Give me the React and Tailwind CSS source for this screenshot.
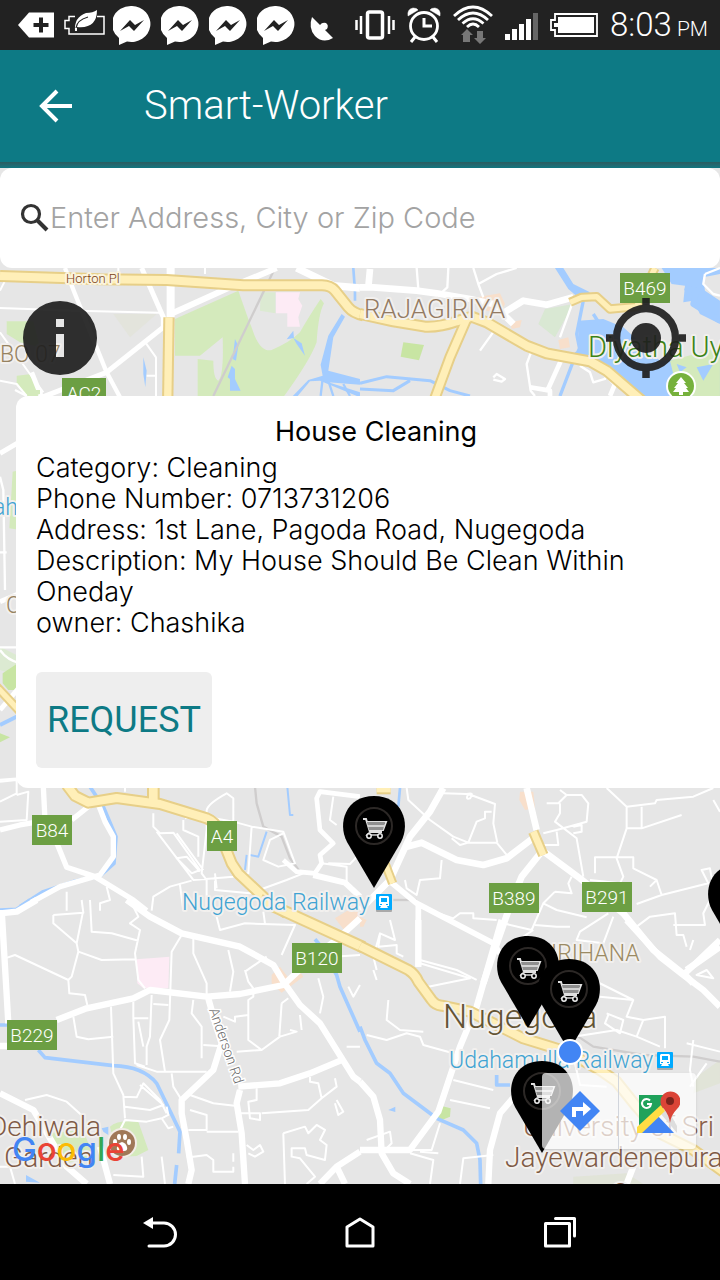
import React from "react";

const TILES = [
  {
    at: "translate(0 264) scale(0.3333)",
    areas: [
      ["#d4eabc", "M525 165L715 80L745 165Q755 190 764 215Q785 265 815 258Q870 235 900 205Q925 160 962 105L972 118Q955 150 950 235Q930 290 850 400H593V285L640 290Q640 345 655 350Q672 335 668 220L600 275H525Z"],
      ["#d4eabc", "M20 172H100L120 250L60 235L20 210Z"],
      ["#d4eabc", "M50 335L95 330L125 385L110 400H80L50 355Z"],
      ["#fdebf5", "M828 85H900L895 105L907 125L895 160L900 188H862V148H828Z"],
      ["#dcead2", "M782 85H826V148L780 140Z"],
      ["#e3e4dc", "M340 150L470 150L390 220Z"],
      ["#a3ccff", "M705 225L715 245L708 290L698 285ZM695 305L705 315V345L722 380H690V345L683 340ZM880 200L882 222L860 226ZM880 222L905 238L915 275L890 240ZM430 280L440 320L436 370L430 330Z"],
      ["#a3ccff", "M1025 150L1035 158L1000 220L985 320L1080 345V362L985 355L1080 385V400L960 350L930 352L890 400H875L925 348L968 335L962 302L985 215Z"],
    ],
    gray: ["M825 12L640 396"],
    water: [["M1060 12L1065 80V110", 8], ["M968 345L962 396M985 350L1000 396M1030 360L1050 396", 7]],
    white: [
      ["M195 12L225 90L320 325L360 400", 13],
      ["M425 12L490 160V190L320 325L125 400L95 325", 15],
      ["M512 0V160", 24],
      ["M512 150L690 70L830 12", 18],
      ["M890 12L1000 65L1080 72", 22],
      ["M0 132L230 140L480 146M436 235L468 280V400M440 335H468M0 205L90 330L130 385M0 350L50 360L80 396M615 12V30M0 80L20 40M355 12V40", 6],
    ],
    yellow: [
      ["M0 36L300 46L500 48L730 64H960Q990 62 1005 80L1045 130Q1060 148 1090 154", 32],
      ["M507 160L503 420", 30],
    ],
  },
  {
    at: "translate(360 264) scale(0.3333)",
    areas: [
      ["#a3ccff", "M905 12H1080V30L1030 40L1035 80L1080 110V180L1020 150L1000 110L970 115L975 65L935 60Z"],
      ["#a3ccff", "M655 170L730 165L790 190L900 290L1080 280V400H830L740 300L640 280L655 250Z"],
      ["#a3ccff", "M585 12H610L640 60L690 85L660 105L625 75Z"],
      ["#d4eabc", "M930 290L1080 250V396H1000L950 370Z"],
      ["#a3ccff", "M950 300L980 310L960 325ZM1010 310L1060 300L1030 350Z"],
      ["#c8e5a3", "M130 235L192 243L177 289L122 278Z"],
      ["#d9e8d3", "M555 135L640 120L585 220L535 180Z"],
      ["#f8dfcb", "M350 100L420 88L435 120L420 150L360 135ZM595 228L625 220L630 250L600 255ZM450 175L485 168L480 190L455 195Z"],
    ],
    gray: [],
    water: [
      ["M0 358L80 338L210 350L270 380L330 396M0 375L100 380L150 350", 9],
      ["M670 110L650 210L660 260M700 150L770 260M650 265L600 396", 10],
      ["M975 70L1010 80L1000 120L1080 170", 18],
    ],
    white: [
      ["M0 70H40L170 80L230 88L330 105L400 120L460 180M425 150L490 110L560 122L640 100", 20],
      ["M30 15L25 70", 20],
      ["M340 12L355 60L370 100M355 60L410 30L470 12M170 12L175 75M265 12L262 70L240 90M410 190L360 260M515 260L500 300L512 380L525 396M400 340L410 330L435 345L425 353L400 347M640 110L600 220", 7],
      ["M605 285L560 385M510 370L570 380V396M715 305L765 360L750 396", 14],
      ["M660 305L690 325L700 355L735 345L745 320M1035 30L1030 60L1060 90L1080 95M1035 30L1080 12", 7],
    ],
    yellow: [
      ["M320 165L270 280L222 410", 30],
      ["M0 150L100 172L195 188Q240 190 290 172L335 158L380 175L500 245L560 268L690 292L740 320L845 410", 32],
      ["M630 115L665 100L710 98L750 135L830 128L885 12", 24],
    ],
  },
  {
    at: "translate(0 390) scale(0.3333)",
    areas: [
      ["#d4eabc", "M38 245L60 240V420L28 415ZM70 0H120V12L100 18Z"],
      ["#dcead2", "M0 770L60 800V860L0 840Z"],
      ["#c8e5a3", "M8 850L60 815V900H25L8 880ZM0 1030L30 1042L0 1057Z"],
    ],
    gray: [],
    water: [["M0 1005L60 975", 12]],
    white: [["M0 190L60 155M0 635L60 610M0 960L60 890", 15], ["M0 260L10 300L15 600M0 487H20M0 772H60M0 780Q20 810 60 820M45 0L80 18M0 1170L60 1165", 7]],
    yellow: [["M-10 890L60 965", 24]],
  },
  {
    at: "translate(0 640) scale(0.3333)",
    areas: [],
    gray: ["M765 440L770 490L790 560L845 590L870 655L900 695"],
    water: [
      ["M270 440L310 500L348 590L342 670L300 708L220 725L130 755L60 800", 11],
      ["M862 440L870 525L880 525M800 575L775 650L750 645M740 645L735 690", 6],
    ],
    white: [
      ["M130 440L135 540L175 620L200 682L285 710L400 780L440 812M0 570L60 555L100 548M215 540L290 480M290 480L315 545L340 590V650L300 705L180 740L70 800L50 812", 16],
      ["M1080 470L960 455L950 475L960 570L1000 610L960 645L965 670L945 700L890 695L850 660", 14],
      ["M940 705L1035 728L1080 770", 18],
      ["M0 425L50 420V460L0 485M50 465L85 455L80 540L0 545M460 520V560L480 580L520 578L600 690L575 700L530 655L560 650L600 695M470 575L580 720L700 710L745 700L755 560L700 545L590 525L555 535M620 510Q625 490 680 460L700 475V550M620 510V570L605 700L620 720V812M550 540V570L595 590V650M530 580L610 690M375 440V455M540 735L550 812M575 722L510 740L460 770L455 812M645 722V750L750 760L860 720L910 700M755 560L850 575L885 670L835 680L790 660L810 600L850 580M985 670L1050 672L1080 640M1000 470L990 540L1010 555M650 745L645 700M200 755V812M320 740L330 780L300 790V812M965 670L1040 680V728", 6],
    ],
    yellow: [
      ["M460 400V490", 34],
      ["M200 435L225 468L265 488L350 474L480 492L620 535Q645 545 655 570L695 670L715 700L800 780L860 820", 32],
    ],
  },
  {
    at: "translate(360 780) scale(0.3333)",
    areas: [["#f8dfcb", "M480 35H520L525 85L495 90L478 60ZM0 410L20 420L10 440H0Z"]],
    gray: ["M100 360H170"],
    water: [["M120 24L115 80", 8]],
    white: [
      ["M250 24L210 95L150 170L120 235L90 300L0 390M500 24L530 150M525 170L440 235L370 255L290 240L185 188L140 200M545 215L485 290L460 350L400 520L370 610M545 210L660 295L790 400L880 510L980 590L1000 610M1080 500L980 570", 20],
      ["M85 300L170 370L400 490L420 520M175 370V560", 17],
      ["M140 24L145 60L210 120L280 170L325 188H410L440 225M250 40L320 42Q345 35 330 55Q315 60 325 42L405 72L400 130L412 188M395 95H375V115L350 125L325 188L300 195L275 175M245 240L240 295L180 300L170 345L140 325L135 300M560 70H595L620 45L600 30M620 45H665L685 70L680 125L590 150L550 160M600 70V100L585 125L650 175L670 290M590 155L595 195H550M640 140L665 135V155L640 160M740 24L800 80L885 70L890 60L1000 50L1060 24M845 80V145L965 105M800 80V145H845M800 145L770 235L790 290L780 310L690 300M1060 60L1080 95M705 280V232H820V265L890 300L905 345L830 372M870 320L890 300M905 345L1045 310L1025 270L1050 265L1060 320M635 290L625 310L635 340L585 335M585 335L550 370L515 450L430 430M550 370L590 390L680 412M760 410L730 490L650 480L660 455L745 400M525 435L590 440H630M830 440L870 410L945 400L950 465H970L980 500M940 435L1035 435L1030 400L1050 360M180 380L280 415L300 400H340V415L410 420M60 465L55 500L110 495V520L130 530M40 570L50 600M180 540L290 570L350 600M520 450L490 470", 6],
    ],
    yellow: [["M520 155L550 225", 28], ["M75 250L98 310", 24], ["M50 30H92", 22]],
  },
  {
    at: "translate(0 900) scale(0.3333)",
    areas: [
      ["#fdebf5", "M410 178L508 170L505 265H430L412 250Z"],
      ["#d4eabc", "M330 680Q350 660 415 665L445 750L410 768L370 770L340 720ZM140 700L250 690L280 770L200 790Z"],
      ["#f8dfcb", "M1005 55L1070 15L1080 60L1040 100ZM815 225L840 200L870 240L900 215L910 230L845 278L815 250Z"],
      ["#a3ccff", "M305 685L325 680V705L310 695ZM78 825L120 848L78 845Z"],
    ],
    gray: [],
    water: [
      ["M0 30L50 28L90 0M0 375H22M115 450L135 473L340 497Q430 500 470 550L540 695L536 760M530 795L524 852M945 118L960 135L1010 225L1020 260L1080 395", 11],
    ],
    white: [
      ["M0 40L50 35L110 0M380 0L450 50L545 100L720 140L820 195L850 245L900 315L960 370L1060 530L1080 545M1080 55L1020 110L920 190L850 255L720 282L620 290L450 270L400 295L260 325L170 360M5 30L25 370M0 438H25M625 295L640 350L665 430L640 510L545 600V640L560 720L575 810L565 852M0 580L100 630L200 800L260 852M300 740L330 852M715 560L840 550L930 520L1030 478M720 570L710 610L725 700L735 852M960 852L1010 800L1080 755M1010 800L1035 852", 19],
      ["M270 0L275 95L335 100L415 122M160 45L250 38L245 0M160 45V70L230 130L248 40M230 130L235 155L305 180L405 178M235 155L215 230L205 240L45 165L15 175M205 240L208 280L255 285L262 315M390 0L415 50L390 70L420 90L405 160L415 240L435 265M545 105L515 155L508 360L480 420L495 515M580 115V160L620 250V285M685 150L700 215L690 275M580 300L575 340L605 380V475M455 285L450 410L440 440V495M460 312L505 315M400 305V350L405 490L435 500M400 355H445M333 320L340 520L370 585L375 655M220 350L230 410L265 418L340 410M415 365L430 440M610 435L655 438M410 495L470 515H620M515 520L520 560L545 600M370 590L410 592L430 550L480 600L500 640M375 620L450 630L490 615L420 555M570 585L640 610L710 618M570 630L620 645V690L565 690M75 600L140 585L200 605L250 650M485 655L505 685L520 680M485 655L505 645L500 620", 6],
      ["M760 265V290L745 300V420L785 450L840 410L890 395L870 390M745 345L705 350V365L670 350M845 310L865 295M845 310L838 410M710 455L785 450M955 235L970 290L960 340M900 345L905 390M735 210L745 245L760 265M735 215L800 170M845 165L885 75L735 70L660 90L650 50M790 35L795 70M1040 440L1080 440M930 530V545L955 550L965 595L925 630L785 640M965 595L1010 560L1005 535M770 565V600L745 605L750 655L780 660V640L720 640M620 695L715 695M850 700L915 680L925 700L950 675L975 690L960 720L980 735L975 780L920 765L915 745H875V770L900 775L945 830L920 852M850 700L855 852M1010 600L1030 635L1015 645L1005 610M740 735L760 750L780 735L790 755L765 770L745 760M560 770H580L620 765L640 780V815L700 815V800M700 760V785M340 825L430 830L425 770M485 770L495 852M0 800H30L45 852M355 700L375 660L440 665L485 655M1045 260L1060 290L1080 255M1000 170L1080 165", 6],
    ],
    yellow: [["M780 0L1090 142", 34]],
  },
  {
    at: "translate(360 920) scale(0.3333)",
    areas: [
      ["#f8dfcb", "M430 320L450 310L470 350L440 340Z"],
      ["#c8e5a3", "M228 590L245 558L272 565L270 590L240 602Z"],
      ["#e1e4d8", "M640 770L800 760L850 792H640ZM1010 470L1080 420V490L1000 520Z"],
      ["#a3ccff", "M85 570L106 560V576Z"],
    ],
    gray: ["M640 340L700 380L850 405L1000 410L1080 425"],
    water: [["M0 320L15 360L50 430L90 460L130 520L230 595L310 630L350 670L360 720L362 792M410 465V495H450", 11]],
    white: [
      ["M175 0V140M0 485L40 530L60 600L65 700L100 760L150 792M0 690H150L235 575L300 380L350 260L425 0M385 792L390 690L420 580L480 510M820 740L800 792M800 0L900 110L970 165L1080 60M970 165L1030 210L1080 260M650 260L690 240L710 180", 19],
      ["M20 345L80 360L140 340L180 350L190 375L280 400M90 0L105 60L60 40L40 110L50 150M100 110L205 200L330 175L180 130M205 200L230 240M85 240L80 300L120 330L190 335M280 480L400 510M270 540L390 565M65 700L95 670L90 635L20 660M150 700L220 720L210 792M300 792L310 715L400 705M240 610L215 690H150M180 695L235 700M720 230L820 240L800 290L850 300L830 350L900 380M640 350L770 330L830 350M820 240L700 180M740 280L790 300L780 340L735 310L745 285M850 300L915 290V385M1000 360L990 450L1000 500M1080 395L980 370M1040 430L990 500M645 430L660 495L740 500M990 90L1000 60M1010 165L1060 175L1040 150Z", 6],
    ],
    yellow: [
      ["M0 78L145 150Q165 162 175 185L215 240Q225 255 245 257L330 275L490 355L620 395L720 450L770 485L830 560L900 640L1000 690L1090 755", 32],
    ],
  },
];

function Tile({ tile }) {
  return (
    <g transform={tile.at} fill="none" strokeLinejoin="round">
      {tile.areas.map(([fill, d]) => (
        <path key={d} d={d} fill={fill} />
      ))}
      {tile.water.map(([d, w]) => (
        <path key={d} d={d} stroke="#a3ccff" strokeWidth={w} />
      ))}
      {tile.gray.map((d) => (
        <path key={d} d={d} stroke="#cfcdcd" strokeWidth="7" />
      ))}
      {tile.white.map(([d, w]) => (
        <path key={d} d={d} stroke="#ffffff" strokeWidth={w} />
      ))}
      {tile.yellow.map(([d, w]) => (
        <path key={d} d={d} stroke="#e7cf88" strokeWidth={w + 4} />
      ))}
      {tile.yellow.map(([d, w]) => (
        <path key={d} d={d} stroke="#ffefb8" strokeWidth={w - 8} />
      ))}
    </g>
  );
}

function Shield({ x, y, w, children }) {
  return (
    <g>
      <rect x={x} y={y} width={w} height="30" fill="#6c9f43" />
      <text x={x + w / 2} y={y + 22} textAnchor="middle" fontSize="19" fill="#ffffff">
        {children}
      </text>
    </g>
  );
}

function Label({ x, y, size, fill, halo = "#f2f0ee", children }) {
  return (
    <text x={x} y={y} fontSize={size} fill={fill} stroke={halo} strokeWidth="4" strokeLinejoin="round" paintOrder="stroke">
      {children}
    </text>
  );
}

function Station({ x, y }) {
  return (
    <g transform={`translate(${x} ${y})`}>
      <rect y="1" width="16" height="17" rx="1" fill="#a9a9a9" />
      <rect width="16" height="16" rx="1" fill="#00aaff" />
      <path d="M4 2h8l1 1v9H3V3zM4 14l1-2h6l1 2" fill="#ffffff" />
      <path d="M5 4h6v4H5zM4 10h2v1H4zM10 10h2v1h-2z" fill="#00aaff" />
    </g>
  );
}

function Pin({ x, y }) {
  return (
    <g transform={`translate(${x} ${y})`}>
      <path d="M0 61L-27 15C-37-4-28-31 0-31S37-4 27 15Z" fill="#000000" />
      <circle cy="-1" r="18" fill="none" stroke="#2c2826" strokeWidth="2" />
      <path d="M-11-8h3l4 13h12M-8-5H12L9 3H-5" fill="none" stroke="#e0e0e0" strokeWidth="2" />
      <path d="M-7-5H11L9 3H-5Z" fill="#8f8f8f" />
      <path d="M-6-1H10" stroke="#e8e8e8" strokeWidth="1.5" />
      <path d="M-4 5l-3 3H8" fill="none" stroke="#d0d0d0" strokeWidth="1.5" />
      <circle cx="-5" cy="9" r="2.2" fill="#000" stroke="#eee" strokeWidth="1.5" />
      <circle cx="6" cy="9" r="2.2" fill="#000" stroke="#eee" strokeWidth="1.5" />
    </g>
  );
}

function MapCanvas() {
  return (
    <svg
      className="absolute inset-0 h-full w-full font-[Roboto,sans-serif] font-light"
      viewBox="0 168 720 1016"
      preserveAspectRatio="xMidYMin slice"
      role="img"
      aria-label="Map of Nugegoda"
    >
      <rect x="0" y="168" width="720" height="1016" fill="#e6e6e6" />
      {TILES.map((tile) => (
        <Tile key={tile.at} tile={tile} />
      ))}

      <Label x="66" y="283" size="13" fill="#7a3d12" halo="#fbf3dc">Horton Pl</Label>
      <Label x="364" y="318" size="26" fill="#937a62">RAJAGIRIYA</Label>
      <Label x="0" y="362" size="23" fill="#968260">BO 07</Label>
      <Label x="588" y="357" size="29" fill="#3c8316">Diyatha Uyana</Label>
      <Label x="-7" y="515" size="23" fill="#3fa3d3">ah</Label>
      <Label x="6" y="613" size="23" fill="#968260">CO</Label>
      <Shield x={62} y={378} w={44}>AC2</Shield>
      <Shield x={620} y={273} w={50}>B469</Shield>
      <circle cx="681" cy="386" r="15" fill="#ffffff" />
      <circle cx="681" cy="386" r="13" fill="#76b13c" />
      <path d="M681 377l5 6h-2l4 5h-2l3 4h-6v3h-4v-3h-6l3-4h-2l4-5h-2z" fill="#ffffff" />

      <Shield x={32} y={815} w={40}>B84</Shield>
      <Shield x={207} y={821} w={30}>A4</Shield>
      <Shield x={489} y={883} w={50}>B389</Shield>
      <Shield x={582} y={882} w={50}>B291</Shield>
      <Shield x={292} y={943} w={50}>B120</Shield>
      <Shield x={7} y={1020} w={50}>B229</Shield>
      <Label x="182" y="910" size="23" fill="#3fa3d3">Nugegoda Railway</Label>
      <Station x={376} y={894} />
      <Label x="551" y="961" size="23" fill="#9b8a63">IRIHANA</Label>
      <Label x="443" y="1028" size="34" fill="#635434">Nugegoda</Label>
      <Label x="449" y="1068" size="23" fill="#3fa3d3">Udahamulla Railway</Label>
      <Station x={657} y={1052} />
      <Label x="523" y="1136" size="28" fill="#8a5f48">University of Sri</Label>
      <Label x="505" y="1167" size="28" fill="#7f5a45">Jayewardenepura</Label>
      <Label x="611" y="1203" size="28" fill="#7f5a45">C</Label>
      <Label x="-11" y="1136" size="28" fill="#7f5a45">Dehiwala</Label>
      <Label x="4" y="1167" size="28" fill="#7f5a45">Garden</Label>
      <text transform="translate(209 1010) rotate(71)" fontSize="14" fill="#6e6e6e" stroke="#ffffff" strokeWidth="3" paintOrder="stroke">
        Anderson Rd
      </text>

      <circle cx="122" cy="1143" r="15" fill="#f3ede8" />
      <circle cx="122" cy="1143" r="13" fill="#a07858" />
      <g fill="#ffffff">
        <ellipse cx="115" cy="1142" rx="2" ry="3" />
        <ellipse cx="119" cy="1137" rx="2" ry="3" />
        <ellipse cx="125" cy="1137" rx="2" ry="3" />
        <ellipse cx="129" cy="1142" rx="2" ry="3" />
        <path d="M122 1142q4 1 5 5t-3 4h-4q-4 0-3-4t5-5z" />
      </g>

      <Pin x={374} y={827} />
      <Pin x={739} y={895} />
      <Pin x={528} y={967} />
      <Pin x={569} y={990} />
      <Pin x={542} y={1092} />
      <circle cx="570" cy="1052" r="12" fill="#4285f4" stroke="#ffffff" strokeWidth="2" />
    </svg>
  );
}

function Messenger() {
  return (
    <svg className="h-[50px] w-[38px]" viewBox="0 0 38 50" aria-hidden="true">
      <path d="M19 6a19 18 0 1 1-5 35.500L6 45V38A19 18 0 0 1 19 6Z" fill="#fff" />
      <path d="M7 31L17 20L22 25L31 20L21 31L16 26Z" fill="#222" />
    </svg>
  );
}

function StatusBar() {
  return (
    <header className="flex h-[50px] items-center justify-between bg-[#222222] pr-3 pl-[18px] text-white">
      <div className="flex items-center gap-[10px]">
        <svg className="h-[50px] w-9" viewBox="0 0 36 50" aria-hidden="true">
          <path d="M0 25L11 12.500H36V37.500H11Z" fill="#fff" />
          <path d="M23 17.500V32.500M15.500 25H30.500" stroke="#222" strokeWidth="4" />
        </svg>
        <svg className="h-[50px] w-[39px] overflow-visible" viewBox="0 0 39 50" fill="none" aria-hidden="true">
          <path d="M11 16.500H5V20.500H1V28.500H5V34H40V16.500H33" stroke="#fff" strokeWidth="1.500" />
          <path d="M33 10Q33 29 13 27V31H11Q10 17 22 13Q29 13 33 10Z" fill="#fff" />
          <path d="M12 28Q13 20 24 17" stroke="#222" strokeWidth="1.200" />
        </svg>
        <Messenger />
        <Messenger />
        <Messenger />
        <Messenger />
        <svg className="h-[50px] w-7" viewBox="0 0 28 50" aria-hidden="true">
          <path d="M7 17L15 25Q17 22 21 23Q24 25 22 29L20 30L28 38Q18 44 10 36Q3 28 7 17Z" fill="#fff" />
        </svg>
      </div>
      <div className="flex items-center gap-3">
        <svg className="h-[50px] w-10" viewBox="0 0 40 50" fill="none" stroke="#fff" aria-hidden="true">
          <rect x="12.500" y="12" width="15" height="26" rx="2" strokeWidth="3.500" />
          <path d="M6 16V34M34 16V34" strokeWidth="2.500" />
          <path d="M1.500 20V30M38.500 20V30" strokeWidth="2.500" />
        </svg>
        <svg className="h-[50px] w-[34px]" viewBox="0 0 34 50" fill="none" stroke="#fff" aria-hidden="true">
          <circle cx="17" cy="26" r="13.500" strokeWidth="2.800" />
          <path d="M17 18V26H25" strokeWidth="3" />
          <path d="M8 37L4 42M26 37L30 42" strokeWidth="3" />
          <path d="M1 16Q0 9 6 8Q10 8 11 10ZM33 16Q34 9 28 8Q24 8 23 10Z" fill="#fff" strokeWidth="0.500" />
        </svg>
        <svg className="h-[50px] w-10" viewBox="0 0 40 50" fill="none" stroke="#fff" aria-hidden="true">
          <path d="M1 16Q20-2 39 16M5 20Q20 6 35 20M9.500 23.500Q20 14 30.500 23.500M14 27Q20 21 26 27" strokeWidth="2.800" />
          <path d="M14 29L20 35H17V42H10V35H8ZM27 44L21 38H24V31H30V38H33Z" fill="#777" stroke="none" />
        </svg>
        <svg className="h-[50px] w-[33px]" viewBox="0 0 33 50" fill="#fff" aria-hidden="true">
          <path d="M0 34H5V40H0ZM7 29H12V40H7ZM14 24H19V40H14ZM21 19H26V40H21Z" />
          <path d="M28 13H33V40H28Z" fill="#666" />
        </svg>
        <svg className="h-[50px] w-12" viewBox="0 0 48 50" fill="none" aria-hidden="true">
          <path d="M5 14H47V36H5V30H1V20H5Z" stroke="#fff" strokeWidth="1.800" />
          <path d="M8 17H44V33H8V27H4V23H8Z" fill="#fff" />
        </svg>
        <p className="flex items-baseline gap-[5px] font-[Roboto,sans-serif] font-light">
          <span className="text-[33px] leading-[48px]">8:03</span>
          <span className="text-[21px]">PM</span>
        </p>
      </div>
    </header>
  );
}

function AppBar() {
  return (
    <>
      <div className="flex h-28 items-center gap-[68px] bg-[#0d7a85] px-9 text-white">
        <button type="button" aria-label="Back" className="flex h-10 w-10 items-center justify-center">
          <svg className="h-10 w-10" viewBox="0 0 40 40" fill="none" stroke="#fff" strokeWidth="4" aria-hidden="true">
            <path d="M21 5L6 20L21 35M6 20H36" />
          </svg>
        </button>
        <h1 className="font-[Roboto,sans-serif] text-[40px] leading-[48px] font-light">Smart-Worker</h1>
      </div>
      <div className="h-[6px] bg-linear-to-b from-[#2a5c60] to-[#0d7680]" />
    </>
  );
}

function SearchBar() {
  return (
    <form className="relative flex h-[100px] items-center rounded-xl bg-white px-5" onSubmit={(e) => e.preventDefault()}>
      <label htmlFor="address" className="shrink-0">
        <span className="sr-only">Search address</span>
        <svg className="h-[30px] w-[30px]" viewBox="0 0 30 30" fill="none" stroke="#333" aria-hidden="true">
          <circle cx="11" cy="11" r="8.500" strokeWidth="3.200" />
          <path d="M17 17L27 27" strokeWidth="4" />
        </svg>
      </label>
      <input
        id="address"
        type="text"
        placeholder="Enter Address, City or Zip Code"
        className="min-w-0 flex-1 bg-transparent font-[Inter,sans-serif] text-[29px] leading-10 font-light text-gray-800 outline-none placeholder:text-[#a3a3a3]"
      />
    </form>
  );
}

function MapButtons() {
  return (
    <div className="relative mt-[30px] flex items-center justify-between pr-[34px] pl-[23px]">
      <button type="button" aria-label="Information">
        <svg className="h-[74px] w-[74px]" viewBox="0 0 74 74" aria-hidden="true">
          <path
            fillRule="evenodd"
            fill="#1e1e1e"
            fillOpacity="0.92"
            d="M37 0a37 37 0 1 1 0 74a37 37 0 1 1 0-74ZM33 18H41V26H33ZM33 33H41V56H33Z"
          />
        </svg>
      </button>
      <button type="button" aria-label="My location">
        <svg className="h-20 w-20" viewBox="0 0 80 80" fill="none" stroke="#1e1e1e" strokeOpacity="0.92" strokeWidth="7.500" aria-hidden="true">
          <circle cx="40" cy="40" r="29.500" />
          <path d="M40 0V7M40 73V80M0 40H7M73 40H80" />
          <circle cx="40" cy="40" r="15" fill="#1e1e1e" fillOpacity="0.92" stroke="none" />
        </svg>
      </button>
    </div>
  );
}

const DETAILS = [
  ["Category", "Cleaning"],
  ["Phone Number", "0713731206"],
  ["Address", "1st Lane, Pagoda Road, Nugegoda"],
  ["Description", "My House Should Be Clean Within Oneday"],
  ["owner", "Chashika"],
];

function JobCard() {
  return (
    <article className="relative mt-[18px] ml-4 w-full rounded-xl bg-white px-5 pt-[18px] pb-5 font-[Inter,sans-serif] text-[27px] font-light text-black">
      <h2 className="text-center leading-9 font-normal">House Cleaning</h2>
      <div className="mt-[2px] pr-16 leading-[31px]">
        {DETAILS.map(([name, value]) => (
          <p key={name}>
            {name}: {value}
          </p>
        ))}
      </div>
      <button
        type="button"
        className="mt-[34px] flex h-24 w-44 items-center justify-center rounded-md bg-[#eeeeee] font-[Roboto,sans-serif] text-[36px] font-normal text-[#0d7a85]"
      >
        REQUEST
      </button>
    </article>
  );
}

function MapFooter() {
  return (
    <div className="relative mt-auto flex items-end justify-between pr-6 pb-[35px] pl-3">
      <p className="-mb-5 font-[Inter,sans-serif] text-[33px] leading-10 font-medium">
        <span className="text-[#4285f4]">G</span>
        <span className="text-[#ea4335]">o</span>
        <span className="text-[#fbbc05]">o</span>
        <span className="text-[#4285f4]">g</span>
        <span className="text-[#34a853]">l</span>
        <span className="text-[#ea4335]">e</span>
      </p>
      <div className="flex h-[76px] divide-x divide-gray-300 rounded-sm bg-white/70 shadow-sm">
        <button type="button" aria-label="Directions" className="flex w-[77px] items-center justify-center">
          <svg className="h-10 w-10" viewBox="0 0 40 40" aria-hidden="true">
            <path d="M20 0L40 20L20 40L0 20Z" fill="#4285f4" />
            <path d="M12 26V16H23V11L31 18L23 25V20H16V26Z" fill="#fff" />
          </svg>
        </button>
        <button type="button" aria-label="Open in Google Maps" className="flex w-[77px] items-center justify-center">
          <svg className="h-11 w-11" viewBox="0 0 44 44" aria-hidden="true">
            <path d="M3 6H28L30 16L3 42Z" fill="#1fa25b" />
            <path d="M3 44L21 26L38 44Z" fill="#4285f4" />
            <path d="M25 25L31 19L41 37V44Z" fill="#dddddd" />
            <path d="M1 38L25 16L29 22L6 44H1Z" fill="#ffdd44" />
            <path d="M34 34Q33 26 28 20A10 10 0 1 1 41 20Q35 26 34 34Z" fill="#db4437" />
            <circle cx="34" cy="12" r="4" fill="#7b231c" />
            <path d="M14 11.500A4.500 4.500 0 1 0 15 15H11" fill="none" stroke="#fff" strokeWidth="2" />
          </svg>
        </button>
      </div>
    </div>
  );
}

function NavBar() {
  const key = "flex flex-1 items-center justify-center";
  return (
    <nav className="flex h-24 bg-black px-[60px]" aria-label="System">
      <button type="button" aria-label="Back" className={key}>
        <svg className="h-9 w-9" viewBox="0 0 36 36" fill="none" stroke="#fff" strokeWidth="3" strokeLinecap="round" aria-hidden="true">
          <path d="M10 9H22A11.500 11.500 0 0 1 22 32H7" />
          <path d="M1 9L11 3V15Z" fill="#fff" stroke="none" />
        </svg>
      </button>
      <button type="button" aria-label="Home" className={key}>
        <svg className="h-9 w-9" viewBox="0 0 36 36" fill="none" stroke="#fff" strokeWidth="3" strokeLinejoin="round" aria-hidden="true">
          <path d="M18 5L31 13V32H5V13Z" />
        </svg>
      </button>
      <button type="button" aria-label="Recent apps" className={key}>
        <svg className="h-9 w-9" viewBox="0 0 36 36" fill="none" stroke="#fff" strokeWidth="3" strokeLinejoin="round" strokeLinecap="round" aria-hidden="true">
          <path d="M3.500 9.500H27.500V32H3.500Z" />
          <path d="M13.500 4.500H32.500V22" />
        </svg>
      </button>
    </nav>
  );
}

export default function App() {
  return (
    <div className="flex min-h-screen flex-col bg-black">
      <StatusBar />
      <AppBar />
      <main className="relative flex flex-1 flex-col overflow-hidden bg-[#e6e6e6]">
        <MapCanvas />
        <SearchBar />
        <MapButtons />
        <JobCard />
        <MapFooter />
      </main>
      <NavBar />
    </div>
  );
}
